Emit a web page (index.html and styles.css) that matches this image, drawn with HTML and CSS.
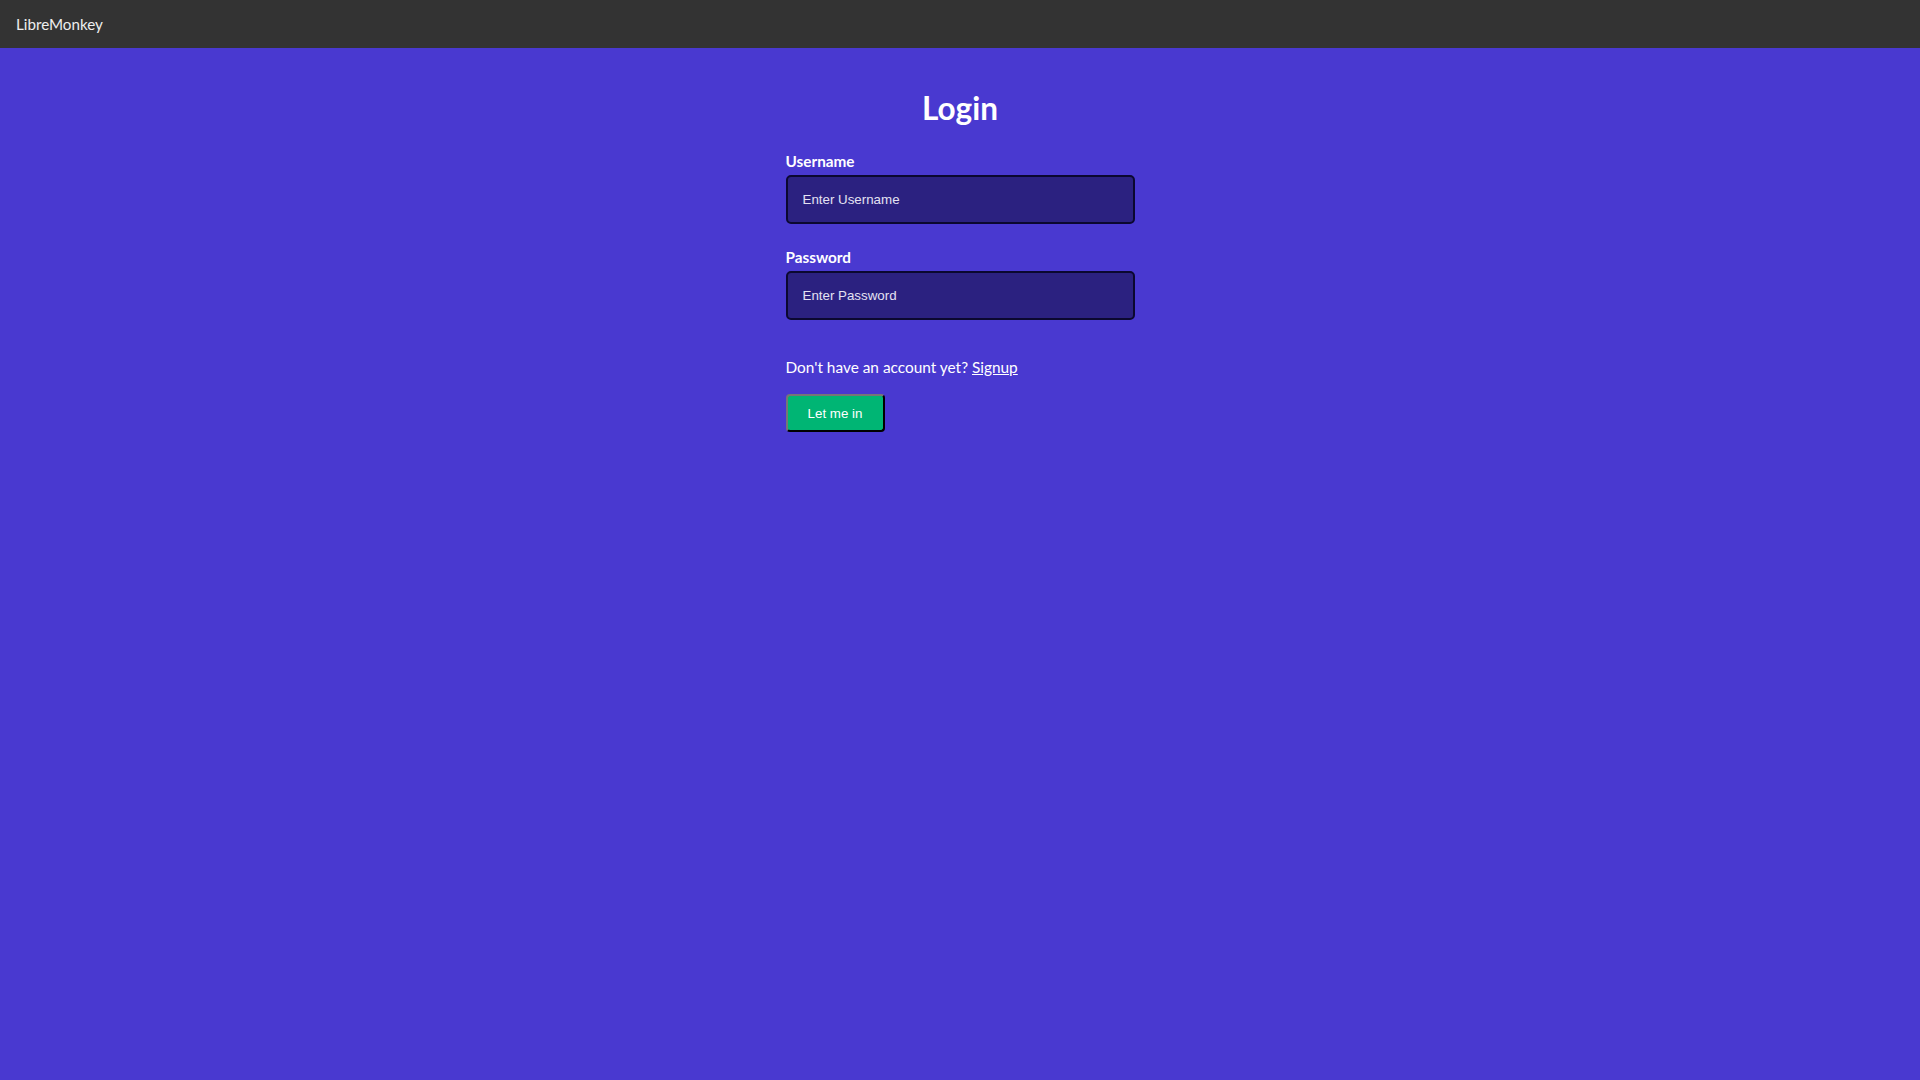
FILE: index.html
```html
<!DOCTYPE html>
<html lang="en">
<head>
<meta charset="utf-8">
<title>LibreMonkey - Login</title>
<link rel="stylesheet" href="styles.css">
</head>
<body>
<header class="topbar">
  <span class="brand">LibreMonkey</span>
</header>
<main class="page">
  <form class="login">
    <h1 class="title">Login</h1>
    <label class="label" for="username">Username</label>
    <input class="field" id="username" type="text" placeholder="Enter Username">
    <label class="label label-gap" for="password">Password</label>
    <input class="field" id="password" type="password" placeholder="Enter Password">
    <p class="signup">Don't have an account yet? <a class="signup-link" href="#">Signup</a></p>
    <button class="submit" type="button">Let me in</button>
  </form>
</main>
</body>
</html>
```
FILE: styles.css
```css
* { box-sizing: border-box; }
html, body { margin: 0; padding: 0; }
body {
  background: #4939d0;
  color: #ffffff;
  font-family: Lato, "Noto Sans", sans-serif;
  min-height: 100vh;
}
.topbar {
  height: 48px;
  background: #333333;
  display: flex;
  align-items: center;
  padding-left: 16px;
}
.brand {
  font-size: 15.2px;
  color: #eeeeee;
}
.page {
  display: flex;
  justify-content: center;
}
.login {
  width: 349px;
  display: flex;
  flex-direction: column;
}
.title {
  margin: 38px 0 0;
  font-size: 31.5px;
  line-height: 44px;
  text-align: center;
  font-weight: 700;
}
.label {
  margin-top: 20px;
  font-size: 15.3px;
  line-height: 22px;
  font-weight: 700;
}
.label-gap { margin-top: 22px; }
.field {
  margin-top: 3px;
  height: 49px;
  width: 100%;
  background: #2b2180;
  border: 2px solid #0b0830;
  border-radius: 5px;
  padding: 0 15px;
  color: #ffffff;
  font-family: "Liberation Sans", Arial, sans-serif;
  font-size: 13.33px;
}
.field::placeholder { color: #e4e2f2; }
.signup {
  margin: 36px 0 0;
  font-size: 15.4px;
  line-height: 22px;
}
.signup-link { color: #ffffff; text-decoration: underline; }
.submit {
  margin-top: 16px;
  width: 99px;
  height: 38px;
  background: #00b574;
  color: #ffffff;
  border: 2px outset #767676;
  border-color: #767676 #2a2a40 #2a2a40 #767676;
  border-radius: 4px;
  font-family: "Liberation Sans", Arial, sans-serif;
  font-size: 13.33px;
  cursor: pointer;
}
```
